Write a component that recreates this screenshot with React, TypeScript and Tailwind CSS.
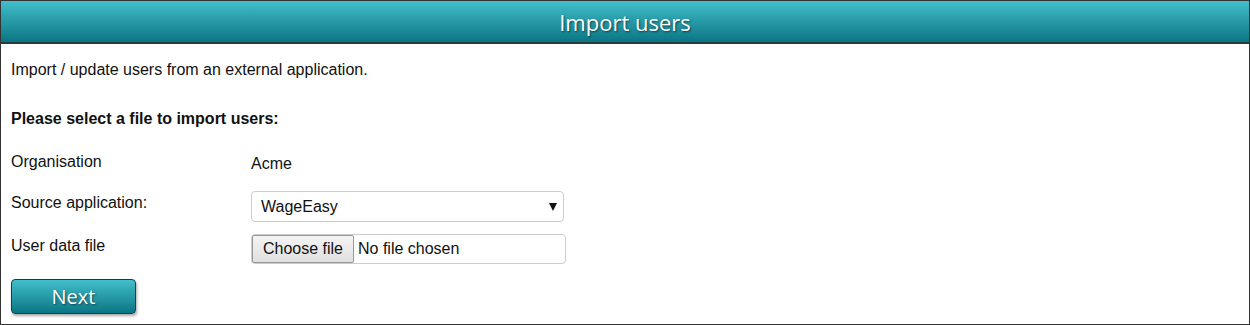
import { useState } from "react";

const labelCls = "w-[240px] shrink-0";

/** Import users form panel. */
export default function App() {
  const [source, setSource] = useState("WageEasy");

  return (
    <div className="h-[325px] w-[1250px] border border-[#333] bg-white font-['Liberation_Sans',Arial,sans-serif] text-[16px] leading-[24px] text-[#111]">
      <header className="flex h-[43px] items-center justify-center border-b-2 border-[#2b3a3d] bg-gradient-to-b from-[#41bfcb] to-[#077684]">
        <h1 className="font-['Open_Sans',sans-serif] text-[22px] text-white [text-shadow:1px_1px_2px_rgba(0,0,0,0.55)]">
          Import users
        </h1>
      </header>

      <div className="px-[10px] pt-[14px]">
        <p>Import / update users from an external application.</p>

        <h2 className="mt-[25px] font-bold">Please select a file to import users:</h2>

        <div className="mt-[19px] flex items-start">
          <span className={labelCls}>Organisation</span>
          <span className="pt-[2px]">Acme</span>
        </div>

        <div className="mt-[15px] flex items-start">
          <span className={labelCls}>Source application:</span>
          <div className="relative">
            <select
              value={source}
              onChange={(e) => setSource(e.target.value)}
              className="h-[31px] w-[313px] appearance-none rounded-[4px] border border-[#ccc] bg-white pl-[9px] text-[16px] text-[#111]"
            >
              <option>WageEasy</option>
              <option>MYOB</option>
              <option>Xero</option>
            </select>
            <svg
              className="pointer-events-none absolute right-[7px] top-[12px]"
              width="8"
              height="8"
              viewBox="0 0 8 8"
              aria-hidden="true"
            >
              <path d="M0 0h8L4 8z" fill="#111" />
            </svg>
          </div>
        </div>

        <div className="mt-[12px] flex items-start">
          <span className={labelCls}>User data file</span>
          <div className="flex h-[30px] w-[315px] items-center rounded-[4px] border border-[#ccc] text-[16px]">
            <span className="flex h-[28px] w-[102px] items-center justify-center rounded-[2px] border border-[#999] bg-gradient-to-b from-[#f4f4f4] to-[#e0e0e0]">
              Choose file
            </span>
            <span className="ml-[4px]">No file chosen</span>
          </div>
        </div>

        <button className="mt-[15px] flex h-[35px] w-[125px] items-center justify-center rounded-[4px] border border-[#1f3a40] bg-gradient-to-b from-[#41bfcb] to-[#077684] font-['Open_Sans',sans-serif] text-[20px] text-white shadow-[1px_2px_3px_rgba(0,0,0,0.35)] [text-shadow:1px_1px_2px_rgba(0,0,0,0.5)]">
          Next
        </button>
      </div>
    </div>
  );
}
